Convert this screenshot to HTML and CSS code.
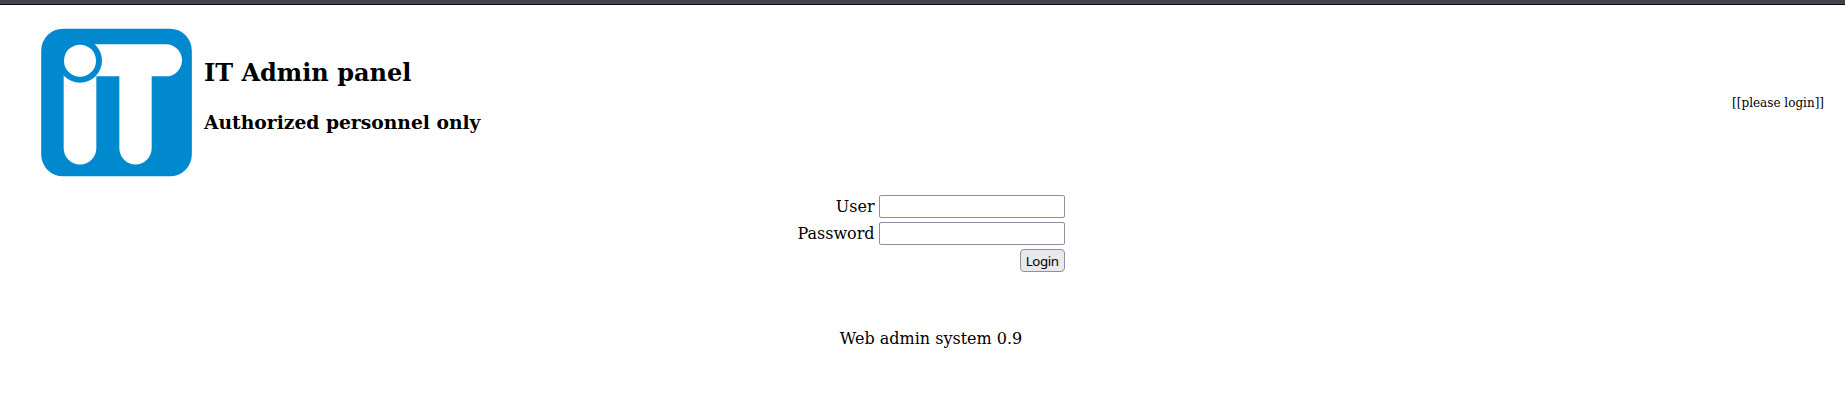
FILE: index.html
```html
<!DOCTYPE html>
<html lang="en">
<head>
<meta charset="utf-8">
<title>IT Admin panel</title>
<link rel="stylesheet" href="styles.css">
</head>
<body>
<div class="topbar"></div>
<header class="header">
  <svg class="logo" viewBox="33 39 453 447" role="img" aria-label="iT">
    <rect x="33.500" y="41" width="452" height="443" rx="66" fill="#0089cf"/>
    <path fill="#fff" d="M190 88H408a48 48 0 0 1 0 96H365V400a48.500 48.500 0 0 1-97 0V184H199V400a49 48.500 0 0 1-98 0V175Z"/>
    <circle cx="150" cy="137" r="66" fill="#0089cf"/>
    <circle cx="150" cy="137" r="48" fill="#fff"/>
  </svg>
  <div class="titles">
    <h2 class="title">IT Admin panel</h2>
    <h3 class="subtitle">Authorized personnel only</h3>
  </div>
  <div class="status">[[please login]]</div>
</header>
<main class="main">
  <form class="form">
    <label class="label" for="user">User</label>
    <input class="field" id="user" type="text">
    <label class="label" for="pass">Password</label>
    <input class="field" id="pass" type="password">
    <button class="login" type="button">Login</button>
  </form>
  <p class="version">Web admin system 0.9</p>
</main>
</body>
</html>
```
FILE: styles.css
```css
* { box-sizing: border-box; }
body {
  margin: 0;
  background: #fff;
  color: #000;
  font-family: "DejaVu Serif", serif;
  font-size: 16px;
  line-height: 19px;
}
.topbar {
  height: 5px;
  background: #42444d;
  border-bottom: 1px solid #0c0c14;
}
.header {
  display: flex;
  align-items: flex-start;
  padding: 23px 21px 0 41px;
}
.logo { display: block; width: 151px; height: 149px; }
.titles { margin-left: 12px; padding-top: 31px; }
.title { margin: 0; font-size: 24px; line-height: 28px; }
.subtitle { margin: 24px 0 0; font-size: 18.72px; line-height: 22px; }
.status { margin-left: auto; padding-top: 68px; font-size: 12px; line-height: 15px; }
.main {
  display: flex;
  flex-direction: column;
  align-items: center;
  padding: 18px 0 0 17px;
}
.form {
  display: grid;
  grid-template-columns: auto 186px;
  gap: 4px;
  justify-items: end;
  align-items: center;
}
.field {
  width: 186px;
  height: 23px;
  border: 1px solid #8f8f9d;
  border-radius: 2px;
  background: #fff;
}
.login {
  grid-column: 2;
  width: 45px;
  height: 23px;
  padding: 0;
  border: 1px solid #8f8f9d;
  border-radius: 4px;
  background: #e9e9ed;
  color: #000;
  font: 13.333px "Noto Sans", sans-serif;
  letter-spacing: -0.4px;
}
.version { margin: 57px 0 0; }
```
